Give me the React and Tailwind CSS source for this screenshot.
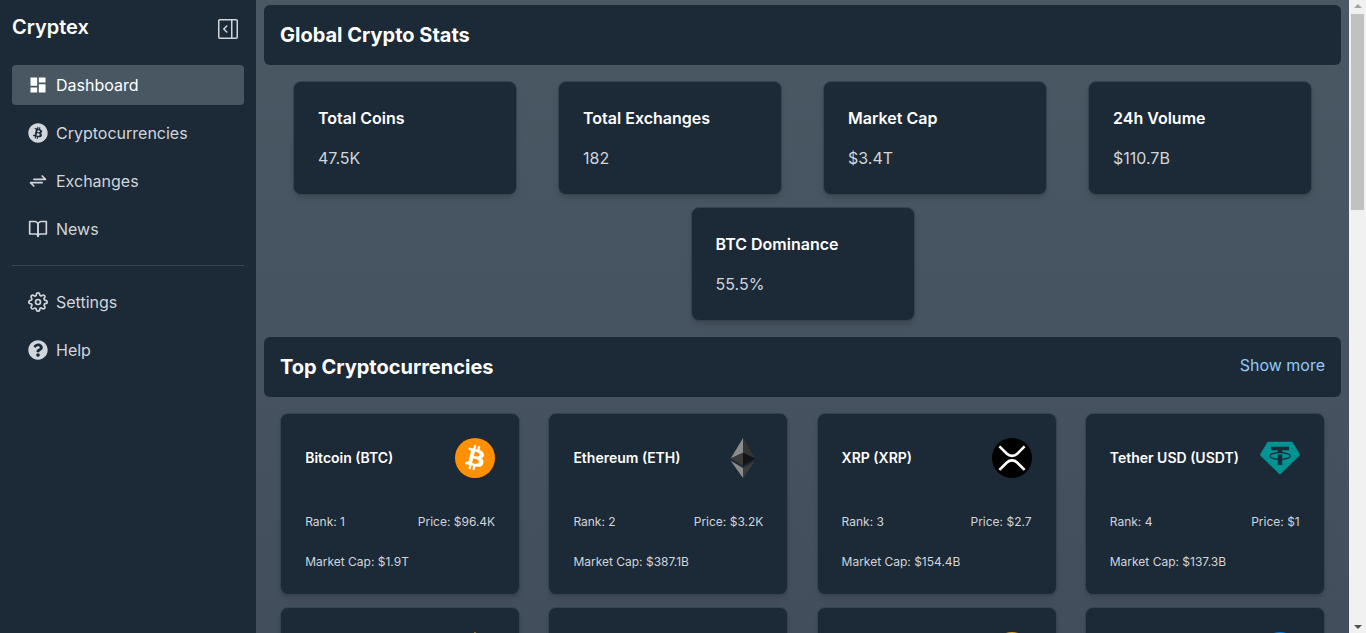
import React from 'react';
import { FiBookOpen, FiSettings } from 'react-icons/fi';
import { GoSidebarExpand } from 'react-icons/go';
import { MdDashboard } from 'react-icons/md';
import { FaBitcoin, FaQuestionCircle } from 'react-icons/fa';
import { TbArrowsExchange } from 'react-icons/tb';

const mainLinks = [
  { label: 'Dashboard', Icon: MdDashboard, active: true },
  { label: 'Cryptocurrencies', Icon: FaBitcoin },
  { label: 'Exchanges', Icon: TbArrowsExchange },
  { label: 'News', Icon: FiBookOpen },
];

const extraLinks = [
  { label: 'Settings', Icon: FiSettings },
  { label: 'Help', Icon: FaQuestionCircle },
];

const stats = [
  { label: 'Total Coins', value: '47.5K' },
  { label: 'Total Exchanges', value: '182' },
  { label: 'Market Cap', value: '$3.4T' },
  { label: '24h Volume', value: '$110.7B' },
  { label: 'BTC Dominance', value: '55.5%' },
];

function BitcoinLogo() {
  return (
    <svg viewBox="0 0 64 64" className="size-10" aria-hidden="true">
      <circle cx="32" cy="32" r="32" fill="#ff9100" />
      <path
        fill="#fff"
        d="M46.1 27.4c.6-4.3-2.6-6.5-7-8.1l1.400-5.700-3.500-.9-1.400 5.600-2.800-.7 1.400-5.600-3.500-.9-1.400 5.700-2.200-.5-4.800-1.200-.9 3.700s2.600.6 2.500.6c1.400.4 1.700 1.300 1.600 2.100l-3.900 15.700c-.2.400-.6 1.100-1.600.8 0 .1-2.500-.6-2.500-.6l-1.700 4 4.500 1.100 2.500.7-1.400 5.700 3.500.9 1.400-5.700 2.800.7-1.400 5.700 3.500.9 1.400-5.700c6 1.100 10.500.7 12.400-4.700 1.500-4.400-.1-6.900-3.200-8.500 2.300-.5 4-2 4.500-5.100zm-8 11.200c-1.100 4.400-8.400 2-10.800 1.400l1.900-7.700c2.400.6 10 1.800 8.900 6.300zm1.100-11.300c-1 4-7.100 2-9.100 1.500l1.800-7c2 .5 8.400 1.400 7.300 5.500z"
      />
    </svg>
  );
}

function EthereumLogo() {
  return (
    <svg viewBox="0 0 40 40" className="size-10" aria-hidden="true">
      <path fill="#8c8c8c" d="M20 0 7.700 20.400 20 14.800Z" />
      <path fill="#343434" d="M20 0v14.800l12.300 5.600Z" />
      <path fill="#3c3c3b" d="M20 14.800 7.700 20.400 20 27.700Z" />
      <path fill="#141414" d="M20 14.800v12.900l12.300-7.300Z" />
      <path fill="#8c8c8c" d="M7.700 22.700 20 30v10Z" />
      <path fill="#3c3c3b" d="M32.300 22.700 20 30v10Z" />
    </svg>
  );
}

function XrpLogo() {
  return (
    <svg viewBox="0 0 40 40" className="size-10" aria-hidden="true">
      <circle cx="20" cy="20" r="20" fill="#000" />
      <g fill="none" stroke="#fff" strokeWidth="2.600">
        <path d="m7.400 8.400 7.500 7.400a7.200 7.200 0 0 0 10.200 0l7.500-7.400" />
        <path d="m7.400 31.900 7.500-7.400a7.200 7.200 0 0 1 10.200 0l7.500 7.400" />
      </g>
    </svg>
  );
}

function TetherLogo() {
  return (
    <svg viewBox="0 0 40 40" className="size-10" aria-hidden="true">
      <path fill="#009393" d="M8.300 3.700h23.400q.7 0 1 .6l7.100 12q.4.700-.2 1.300L20.700 36q-.7.600-1.400 0L.4 17.600q-.6-.6-.2-1.300l7.100-12q.3-.6 1-.6Z" />
      <path fill="#1c2936" d="M11 8.800h18v3.500h-6.800V15h-4.400v-2.700H11ZM17.800 16.500h4.400V27h-4.400Z" />
      <ellipse cx="20" cy="18" rx="10.200" ry="3.300" fill="none" stroke="#1c2936" strokeWidth="1.200" />
    </svg>
  );
}

function BnbLogo() {
  return (
    <svg viewBox="0 0 40 40" className="size-10" aria-hidden="true">
      <path fill="#f0b90b" d="m20 0 12 12-4.500 4.500L20 9l-7.500 7.500L8 12ZM4.500 15.500 9 20l-4.500 4.500L0 20Zm31 0L40 20l-4.500 4.500L31 20ZM20 15.500l4.500 4.500-4.500 4.500-4.500-4.500Zm-7.500 8L20 31l7.500-7.500L32 28 20 40 8 28Z" />
    </svg>
  );
}

function SolanaLogo() {
  return (
    <svg viewBox="0 0 40 40" className="size-10" aria-hidden="true">
      <path fill="#14f195" d="M8 6h30l-6 6H2Z" />
      <path fill="#5a9ad6" d="M2 17h30l6 6H8Z" />
      <path fill="#9945ff" d="M8 28h30l-6 6H2Z" />
    </svg>
  );
}

function DogeLogo() {
  return (
    <svg viewBox="0 0 40 40" className="size-10" aria-hidden="true">
      <circle cx="20" cy="20" r="20" fill="#d9a82e" />
      <path fill="none" stroke="#fff" strokeWidth="4" d="M15 10v20h5a10 10 0 0 0 0-20h-5M11 20h10" />
    </svg>
  );
}

function UsdcLogo() {
  return (
    <svg viewBox="0 0 40 40" className="size-10" aria-hidden="true">
      <circle cx="20" cy="20" r="20" fill="#0b7ee0" />
      <path fill="none" stroke="#fff" strokeWidth="3" d="M15 7a14 14 0 0 0 0 26M25 7a14 14 0 0 1 0 26M25 16c-1-4-10-4-10 0s10 3 10 8-9 4-10 0M20 10v20" />
    </svg>
  );
}

const coins = [
  { name: 'Bitcoin (BTC)', rank: 1, price: '$96.4K', cap: '$1.9T', Logo: BitcoinLogo },
  { name: 'Ethereum (ETH)', rank: 2, price: '$3.2K', cap: '$387.1B', Logo: EthereumLogo },
  { name: 'XRP (XRP)', rank: 3, price: '$2.7', cap: '$154.4B', Logo: XrpLogo },
  { name: 'Tether USD (USDT)', rank: 4, price: '$1', cap: '$137.3B', Logo: TetherLogo },
  { name: 'BNB (BNB)', rank: 5, price: '$690', cap: '$100.7B', Logo: BnbLogo },
  { name: 'Solana (SOL)', rank: 6, price: '$187', cap: '$90.4B', Logo: SolanaLogo },
  { name: 'Dogecoin (DOGE)', rank: 7, price: '$0.3', cap: '$50.2B', Logo: DogeLogo },
  { name: 'USDC (USDC)', rank: 8, price: '$1', cap: '$44.9B', Logo: UsdcLogo },
];

function NavList({ links }) {
  return (
    <ul className="flex flex-col gap-2">
      {links.map(({ label, Icon, active }) => (
        <li key={label}>
          <a
            href="#"
            aria-current={active ? 'page' : undefined}
            className={
              active
                ? 'flex h-10 items-center gap-2 rounded-sm bg-[#495763] px-4 text-white'
                : 'flex h-10 items-center gap-2 rounded-sm px-4 text-gray-300'
            }
          >
            <Icon className="size-5" aria-hidden="true" />
            {label}
          </a>
        </li>
      ))}
    </ul>
  );
}

function SectionBar({ title, children }) {
  return (
    <header className="flex items-start justify-between rounded-md bg-[#1c2936] p-4">
      <h2 className="text-xl font-bold text-white">{title}</h2>
      {children}
    </header>
  );
}

function StatCard({ label, value }) {
  return (
    <article className="flex w-56 flex-col gap-4 rounded-lg border border-[#364350] bg-[#1c2936] p-6 shadow-md">
      <h3 className="font-semibold text-white">{label}</h3>
      <p className="text-gray-300">{value}</p>
    </article>
  );
}

function CoinCard({ name, rank, price, cap, Logo }) {
  return (
    <article className="w-60 rounded-lg border border-[#364350] bg-[#1c2936] p-6 text-xs text-gray-300 shadow-md">
      <div className="mb-9 flex items-center justify-between">
        <h3 className="text-sm font-semibold text-white">{name}</h3>
        <Logo />
      </div>
      <div className="mb-6 flex justify-between">
        <p>Rank: {rank}</p>
        <p>Price: {price}</p>
      </div>
      <p>Market Cap: {cap}</p>
    </article>
  );
}

function ScrollRail() {
  return (
    <div className="flex w-[17px] shrink-0 flex-col items-center justify-between bg-[#f1f1f1] py-1" aria-hidden="true">
      <div className="flex flex-col items-center gap-1.5">
        <svg viewBox="0 0 8 4" className="h-1 w-2"><path fill="#a3a3a3" d="M4 0 8 4H0Z" /></svg>
        <div className="h-[196px] w-[13px] bg-[#c1c1c1]" />
      </div>
      <svg viewBox="0 0 8 4" className="h-1 w-2"><path fill="#505050" d="M4 4 0 0h8Z" /></svg>
    </div>
  );
}

export default function App() {
  return (
    <div className="flex h-screen overflow-hidden bg-[#1c2936] font-['Inter',sans-serif]">
      <aside className="w-64 shrink-0 p-3">
        <div className="mb-5 flex h-[33px] items-start justify-between">
          <h1 className="text-xl leading-[30px] font-semibold text-white">Cryptex</h1>
          <button type="button" aria-label="Collapse sidebar" className="self-center px-1 text-gray-300">
            <GoSidebarExpand className="size-6" aria-hidden="true" />
          </button>
        </div>
        <nav>
          <NavList links={mainLinks} />
          <hr className="my-4 border-[#364553]" />
          <NavList links={extraLinks} />
        </nav>
      </aside>
      <main className="h-full min-w-0 flex-1 overflow-hidden bg-linear-to-b from-[#4a5864] to-[#434e5c] px-2 py-[5px]">
        <SectionBar title="Global Crypto Stats" />
        <section className="my-4 flex flex-wrap justify-evenly gap-3">
          {stats.map((s) => (
            <StatCard key={s.label} {...s} />
          ))}
        </section>
        <SectionBar title="Top Cryptocurrencies">
          <a href="#" className="text-[#90caf9]">Show more</a>
        </SectionBar>
        <section className="my-4 flex flex-wrap justify-evenly gap-3">
          {coins.map((c) => (
            <CoinCard key={c.name} {...c} />
          ))}
        </section>
      </main>
      <ScrollRail />
    </div>
  );
}
